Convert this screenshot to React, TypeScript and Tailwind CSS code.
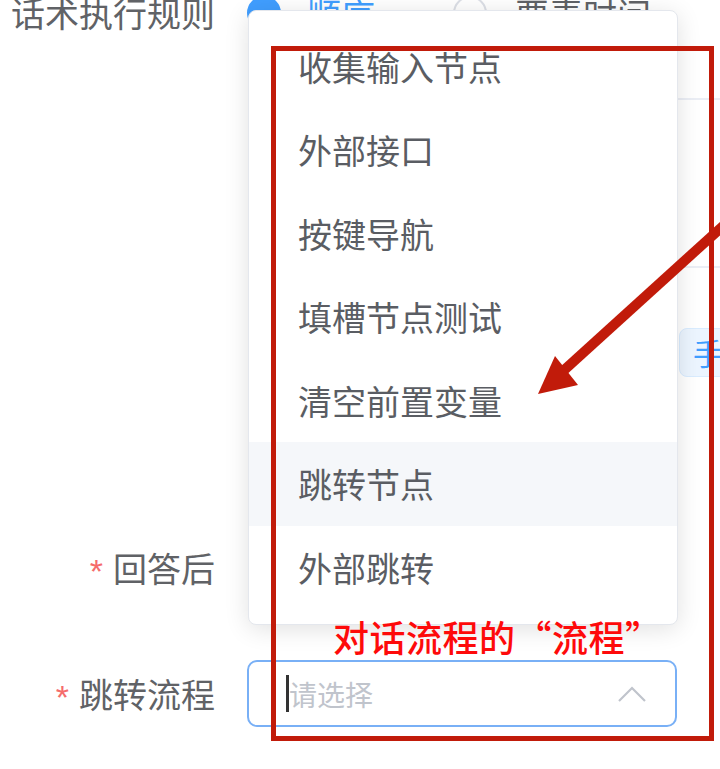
const FONT = "font-['Noto_Sans_CJK_SC','Noto_Sans',sans-serif]";

const OPTIONS = ["收集输入节点", "外部接口", "按键导航", "填槽节点测试", "清空前置变量", "跳转节点", "外部跳转"];

function Label({ text, required }: { text: string; required?: boolean }) {
  return (
    <div className="flex w-[215px] shrink-0 items-center justify-end text-[34px] leading-[40px] text-[#606266]">
      {required && (
        <span className="mr-[10px] mt-[6px] font-['Liberation_Sans',sans-serif] text-[34px] text-[#f56c6c]">*</span>
      )}
      <span>{text}</span>
    </div>
  );
}

function Dropdown() {
  return (
    <div className="absolute left-[248px] top-[10px] h-[615px] w-[430px] overflow-hidden rounded-[8px] border border-[#e4e7ed] bg-white shadow-[0_4px_24px_rgba(0,0,0,0.12)]">
      <ul className="pt-[13.5px]">
        {OPTIONS.map((o) => (
          <li
            key={o}
            className={
              "flex h-[83.5px] items-center pl-[49px] text-[34px] text-[#5a5d63] " +
              (o === "跳转节点" ? "bg-[#f5f7fa]" : "")
            }
          >
            {o}
          </li>
        ))}
      </ul>
    </div>
  );
}

function Annotations() {
  return (
    <>
      <div className="pointer-events-none absolute left-[271px] top-[46px] h-[695px] w-[443px] border-[5px] border-[#c11b0a]" />
      <div className="absolute left-[333px] top-[612px] whitespace-nowrap text-[36px] leading-[48px] font-medium tracking-[0.5px] text-[#fe0a0a]">
        对话流程的“流程”
      </div>
      <svg className="pointer-events-none absolute left-0 top-0" width="720" height="769" viewBox="0 0 720 769">
        <line x1="724" y1="225" x2="562" y2="372" stroke="#c11b0a" strokeWidth="10" />
        <polygon points="538,394 555,356 578,385" fill="#c11b0a" />
      </svg>
    </>
  );
}

export default function App() {
  return (
    <div className={`relative h-[769px] w-[720px] overflow-hidden bg-white ${FONT}`}>
      {/* 话术执行规则 */}
      <div className="-mt-[7px] flex h-[40px] items-center">
        <Label text="话术执行规则" />
        <div className="ml-[32px] flex items-center whitespace-nowrap">
          <span className="h-[34px] w-[34px] rounded-full border-[2px] border-[#409eff] bg-[#409eff]" />
          <span className="ml-[26px] text-[34px] text-[#409eff]">顺序</span>
          <span className="ml-[78px] h-[34px] w-[34px] rounded-full border-[2px] border-[#dcdfe6] bg-white" />
          <span className="ml-[28px] text-[34px] text-[#606266]">要素时间</span>
        </div>
      </div>

      {/* panel behind the dropdown */}
      <div className="ml-[248px] mt-[65px] h-[170px] border-y-[2px] border-[#ebeef5]" />
      <div className="ml-[679px] mt-[60px] flex h-[49px] w-[80px] items-center whitespace-nowrap rounded-[8px] border border-[#d9ecff] bg-[#ecf5ff] pl-[13px] text-[30px] text-[#409eff]">
        手动
      </div>

      {/* 回答后 */}
      <div className="mt-[161px] flex h-[60px] items-center">
        <Label text="回答后" required />
      </div>

      {/* 跳转流程 */}
      <div className="mt-[62px] flex items-center">
        <Label text="跳转流程" required />
        <div className="ml-[32px] flex h-[67px] w-[430px] items-center rounded-[10px] border-[2px] border-[#79b0f6] pl-[37px] pr-[28px]">
          <span className="h-[37px] w-[3px] bg-[#333]" />
          <span className="flex-1 text-[28px] text-[#c0c4cc]">请选择</span>
          <svg width="30" height="16" viewBox="0 0 30 16" fill="none">
            <path d="M2 15 L15 2 L28 15" stroke="#c0c4cc" strokeWidth="2.2" />
          </svg>
        </div>
      </div>

      <Dropdown />
      <Annotations />
    </div>
  );
}
